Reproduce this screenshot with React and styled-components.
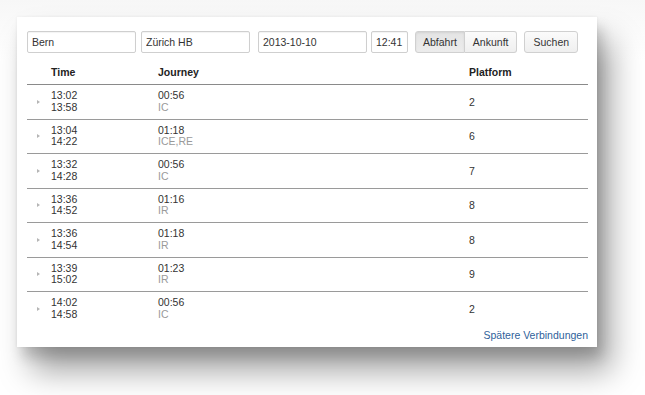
import styled, { createGlobalStyle } from "styled-components";

// Verbindungen Bern > Zürich HB
const connections = [
    { dep: "13:02", arr: "13:58", dur: "00:56", trains: "IC", platform: "2" },
    { dep: "13:04", arr: "14:22", dur: "01:18", trains: "ICE,RE", platform: "6" },
    { dep: "13:32", arr: "14:28", dur: "00:56", trains: "IC", platform: "7" },
    { dep: "13:36", arr: "14:52", dur: "01:16", trains: "IR", platform: "8" },
    { dep: "13:36", arr: "14:54", dur: "01:18", trains: "IR", platform: "8" },
    { dep: "13:39", arr: "15:02", dur: "01:23", trains: "IR", platform: "9" },
    { dep: "14:02", arr: "14:58", dur: "00:56", trains: "IC", platform: "2" },
];

const App = () => {
    return (
        <>
            <GlobalStyle />
            <Page>
                <Card>
                    <SearchBar>
                        <Field $w={109} defaultValue="Bern" />
                        <Field $w={109} defaultValue="Zürich HB" />
                        <Field $w={109} $gap={8} defaultValue="2013-10-10" />
                        <Field $w={37} $gap={4} defaultValue="12:41" />
                        <ButtonGroup>
                            <Button $active>Abfahrt</Button>
                            <Button $grouped>Ankunft</Button>
                        </ButtonGroup>
                        <Button $gap={7}>Suchen</Button>
                    </SearchBar>

                    <Table>
                        <HeadRow>
                            <span />
                            <span>Time</span>
                            <span>Journey</span>
                            <span>Platform</span>
                        </HeadRow>
                        {connections.map((c, i) => (
                            <Row key={i} $first={i === 0}>
                                <Arrow />
                                <Cell>
                                    <div>{c.dep}</div>
                                    <div>{c.arr}</div>
                                </Cell>
                                <Cell>
                                    <div>{c.dur}</div>
                                    <Trains>{c.trains}</Trains>
                                </Cell>
                                <Platform>{c.platform}</Platform>
                            </Row>
                        ))}
                    </Table>
                    <More>
                        <a href="#later">Spätere Verbindungen</a>
                    </More>
                </Card>
            </Page>
        </>
    );
};

export default App;

const GlobalStyle = createGlobalStyle`
    html, body {
        margin: 0;
        height: 100%;
    }
    body {
        background: #fff;
        font-family: "Liberation Sans", Arial, sans-serif;
        font-size: 10.5px;
        color: #333;
    }
`;

const Page = styled.div`
    min-height: 395px;
    padding: 17px 0 0 17px;
    box-sizing: border-box;
    background: linear-gradient(#f7f7f7, #fff 60px);
`;

const Card = styled.div`
    width: 580px;
    height: 330px;
    box-sizing: border-box;
    padding: 14px 9px 0 10px;
    background: #fff;
    box-shadow: 0 0 3px rgba(0, 0, 0, 0.06), 14px 24px 30px rgba(0, 0, 0, 0.36),
        5px 10px 12px rgba(0, 0, 0, 0.16);
`;

const SearchBar = styled.div`
    display: flex;
    align-items: center;
    gap: 5px;
`;

const Field = styled.input`
    width: ${(p) => p.$w}px;
    height: 22px;
    box-sizing: border-box;
    margin-left: ${(p) => (p.$gap ? p.$gap - 5 : 0)}px;
    padding: 0 4px;
    border: 1px solid #cfcfcf;
    border-radius: 2px;
    box-shadow: inset 0 1px 1px rgba(0, 0, 0, 0.05);
    font: inherit;
    font-size: 10.5px;
    color: #333;
    outline: none;
`;

const ButtonGroup = styled.div`
    display: flex;
    margin-left: 2px;
`;

const Button = styled.button`
    height: 22px;
    box-sizing: border-box;
    margin-left: ${(p) => (p.$gap ? p.$gap - 5 : 0)}px;
    padding: 0 ${(p) => (p.$active ? 7 : 8)}px;
    border: 1px solid #d0d0d0;
    border-radius: ${(p) => (p.$active ? "3px 0 0 3px" : p.$grouped ? "0 3px 3px 0" : "3px")};
    border-left-width: ${(p) => (p.$grouped ? 0 : 1)}px;
    background: ${(p) =>
        p.$active
            ? "linear-gradient(#e4e4e4, #ececec)"
            : "linear-gradient(#fbfbfb, #efefef)"};
    box-shadow: ${(p) => (p.$active ? "inset 0 1px 2px rgba(0,0,0,0.08)" : "none")};
    font: inherit;
    font-size: 10.5px;
    color: #333;
`;

const Table = styled.div``;

const grid = `
    display: grid;
    grid-template-columns: 24px 107px 311px 1fr;
    align-items: center;
`;

const HeadRow = styled.div`
    ${grid}
    height: 31px;
    box-sizing: border-box;
    padding-top: 7px;
    font-weight: bold;
    color: #222;
`;

const Row = styled.div`
    ${grid}
    height: 34.5px;
    box-sizing: border-box;
    border-top: 1px solid ${(p) => (p.$first ? "#8a8a8a" : "#9a9a9a")};
    line-height: 11.5px;
`;

const Arrow = styled.span`
    justify-self: start;
    margin-left: 10px;
    width: 0;
    height: 0;
    border-top: 2.5px solid transparent;
    border-bottom: 2.5px solid transparent;
    border-left: 3px solid #b5b5b5;
`;

const Cell = styled.div`
    display: flex;
    flex-direction: column;
`;

const Trains = styled.div`
    color: #9a9a9a;
`;

const Platform = styled.div`
    padding-top: 1px;
`;

const More = styled.div`
    display: flex;
    justify-content: flex-end;
    padding-top: 3px;

    a {
        color: #2f5f9a;
        text-decoration: none;
    }
`;
